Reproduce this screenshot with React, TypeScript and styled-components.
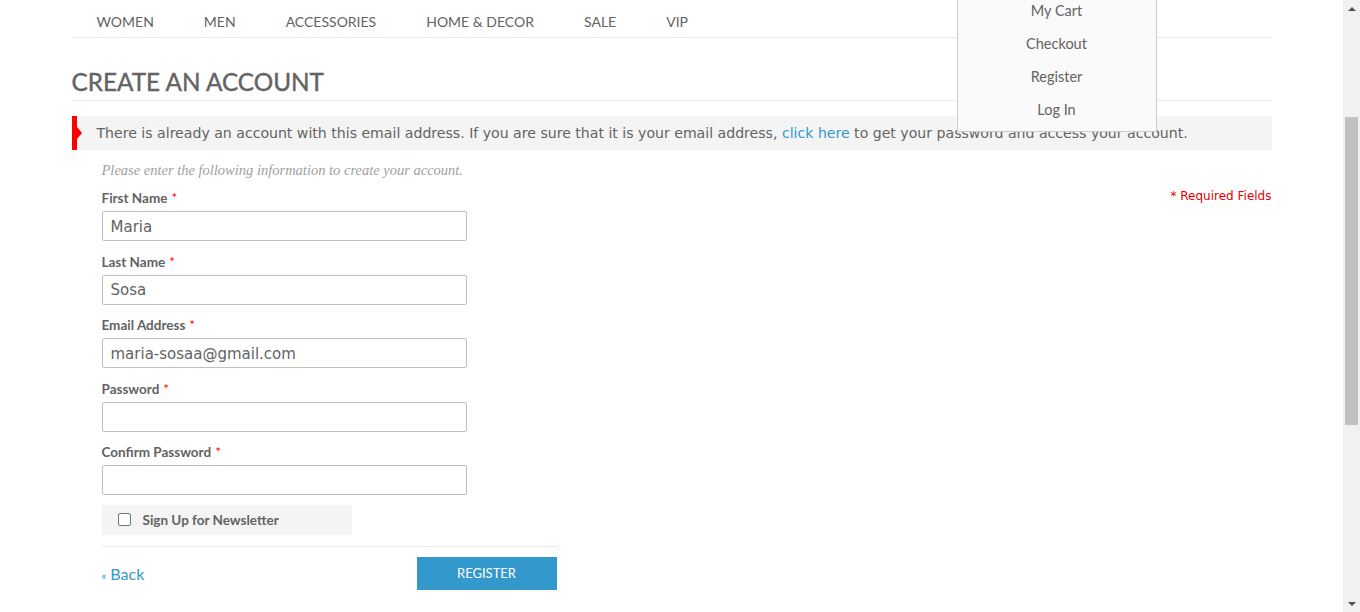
import React, { useLayoutEffect } from "react";
import styled, { createGlobalStyle } from "styled-components";

const GlobalStyle = createGlobalStyle`
  html, body { margin: 0; padding: 0; background: #fff; }
  body { font-family: "Lato", "Open Sans", sans-serif; color: #636363; padding-right: 17px; }
  * { box-sizing: border-box; }
`;

const Page = styled.div`
  position: relative;
  width: 1200px;
  margin: 0 auto;
`;

const Header = styled.header`
  height: 199px;
  display: flex;
  align-items: center;
  justify-content: space-between;
`;

const Logo = styled.div`
  font-size: 28px;
  letter-spacing: 2px;
  color: #3399cc;
`;

const AccountLink = styled.a`
  font-size: 14px;
  color: #636363;
  text-transform: uppercase;
  margin-right: 135px;
`;

const Nav = styled.nav`
  display: flex;
  height: 38px;
  border-bottom: 1px solid #e8e8e8;
  padding-top: 5.5px;
`;

const NavItem = styled.a`
  padding: 0 25px;
  height: 31px;
  line-height: 31px;
  font-size: 14px;
  color: #636363;
  text-transform: uppercase;
`;

const Dropdown = styled.ul`
  position: absolute;
  top: 120px;
  left: 885px;
  width: 200px;
  margin: 0;
  padding: 5.5px 0;
  list-style: none;
  background: #fafafa;
  border: 1px solid #cccccc;
  z-index: 5;
`;

const DropItem = styled.li`
  height: 33px;
  line-height: 33px;
  text-align: center;
  font-size: 14.5px;
  color: #636363;
`;

const Title = styled.h1`
  margin: 29px 0 0;
  font-size: 24.3px;
  line-height: 30px;
  font-weight: 400;
  -webkit-text-stroke: 0.4px #636363;
  color: #636363;
  padding-bottom: 3px;
  border-bottom: 1px solid #ececec;
`;

const Message = styled.div`
  position: relative;
  margin-top: 15px;
  height: 34px;
  line-height: 35px;
  background: #f4f4f4;
  padding-left: 25px;
  font-family: "DejaVu Sans", "Liberation Sans", sans-serif;
  font-size: 14.1px;
  color: #636363;
  white-space: nowrap;
  &::before {
    content: "";
    position: absolute;
    left: 0;
    top: 0;
    width: 5px;
    height: 100%;
    background: #ff0000;
  }
  &::after {
    content: "";
    position: absolute;
    left: 5px;
    top: 11px;
    border-top: 6px solid transparent;
    border-bottom: 6px solid transparent;
    border-left: 5px solid #ff0000;
  }
`;

const Link = styled.a`
  color: #3399cc;
  text-decoration: none;
`;

const FormArea = styled.div`
  display: flex;
  justify-content: space-between;
  padding-left: 30px;
  margin-top: 10px;
`;

const FormColumn = styled.div`
  width: 455px;
  display: flex;
  flex-direction: column;
`;

const Intro = styled.p`
  margin: 0;
  font-family: "Liberation Serif", "DejaVu Serif", serif;
  font-style: italic;
  font-size: 14.5px;
  line-height: 20px;
  color: #a0a0a0;
`;

const Required = styled.p`
  margin: 28px 0 0;
  font-family: "DejaVu Sans", "Liberation Sans", sans-serif;
  font-size: 12px;
  line-height: 17px;
  color: #e60000;
`;

const Field = styled.div<{ $first?: boolean }>`
  margin-top: ${(p) => (p.$first ? "10px" : "12.5px")};
  display: flex;
  flex-direction: column;
`;

const Label = styled.label`
  font-size: 13.5px;
  line-height: 17px;
  font-weight: 700;
  color: #636363;
  margin-bottom: 4px;
  & span {
    color: #ff0000;
    font-weight: 400;
    margin-left: 4px;
  }
`;

const Input = styled.input`
  width: 365px;
  height: 30px;
  border: 1px solid #c0c0c0;
  border-radius: 2px;
  padding: 1px 8px 0;
  font-family: "DejaVu Sans", "Liberation Sans", sans-serif;
  font-size: 15px;
  color: #636363;
  background: #fff;
  outline: none;
`;

const Newsletter = styled.label`
  margin-top: 9.5px;
  width: 250px;
  height: 30px;
  background: #f4f4f4;
  display: flex;
  align-items: center;
  padding-left: 16px;
  gap: 12px;
  font-size: 13.5px;
  font-weight: 700;
  color: #636363;
`;

const Check = styled.span`
  width: 13px;
  height: 13px;
  border: 1px solid #767676;
  border-radius: 2px;
  background: #fff;
`;

const Divider = styled.hr`
  margin: 11px 0 0;
  border: 0;
  border-top: 1px solid #e8e8e8;
  width: 455px;
`;

const Actions = styled.div`
  margin-top: 10px;
  display: flex;
  align-items: center;
  justify-content: space-between;
`;

const BackLink = styled.a`
  color: #3399cc;
  font-size: 16px;
  text-decoration: none;
  & small {
    font-size: 11px;
  }
`;

const RegisterButton = styled.button`
  width: 140px;
  height: 33px;
  border: 0;
  background: #3399cc;
  color: #fff;
  font-family: "Lato", sans-serif;
  font-size: 13px;
  text-transform: uppercase;
`;

const Footer = styled.footer`
  margin-top: 22px;
  height: 337px;
`;

/* Browser-style vertical scrollbar drawn over the right edge of the window */
const ScrollBar = styled.div`
  position: fixed;
  top: 0;
  right: 0;
  width: 17px;
  height: 100vh;
  background: #f1f1f1;
  display: flex;
  flex-direction: column;
  z-index: 10;
`;

const ScrollArrow = styled.div`
  height: 17px;
  display: flex;
  align-items: center;
  justify-content: center;
`;

const ScrollTrack = styled.div`
  flex: 1;
  padding-top: 100px;
`;

const ScrollThumb = styled.div`
  margin: 0 2px;
  height: 308px;
  background: #c1c1c1;
`;

const fields = [
  { label: "First Name", value: "Maria" },
  { label: "Last Name", value: "Sosa" },
  { label: "Email Address", value: "maria-sosaa@gmail.com" },
  { label: "Password", value: "" },
  { label: "Confirm Password", value: "" },
];

export default function App() {
  useLayoutEffect(() => {
    window.scrollTo(0, 199);
  }, []);

  return (
    <>
      <GlobalStyle />
      <Page>
        <Header>
          <Logo>MADISON ISLAND</Logo>
          <AccountLink>Account</AccountLink>
        </Header>
        <Dropdown>
          <DropItem>My Account</DropItem>
          <DropItem>My Wishlist</DropItem>
          <DropItem>My Cart</DropItem>
          <DropItem>Checkout</DropItem>
          <DropItem>Register</DropItem>
          <DropItem>Log In</DropItem>
        </Dropdown>
        <Nav>
          {["Women", "Men", "Accessories", "Home & Decor", "Sale", "VIP"].map((n) => (
            <NavItem key={n}>{n}</NavItem>
          ))}
        </Nav>
        <Title>CREATE AN ACCOUNT</Title>
        <Message>
          There is already an account with this email address. If you are sure that it is your email
          address, <Link>click here</Link> to get your password and access your account.
        </Message>
        <FormArea>
          <FormColumn>
            <Intro>Please enter the following information to create your account.</Intro>
            {fields.map((f, i) => (
              <Field key={f.label} $first={i === 0}>
                <Label>
                  {f.label}
                  <span>*</span>
                </Label>
                <Input type="text" defaultValue={f.value} />
              </Field>
            ))}
            <Newsletter>
              <Check />
              Sign Up for Newsletter
            </Newsletter>
            <Divider />
            <Actions>
              <BackLink>
                <small>«</small> Back
              </BackLink>
              <RegisterButton>Register</RegisterButton>
            </Actions>
          </FormColumn>
          <Required>* Required Fields</Required>
        </FormArea>
        <Footer />
      </Page>
      <ScrollBar>
        <ScrollArrow>
          <svg width="8" height="4" viewBox="0 0 8 4">
            <path d="M0 4 L4 0 L8 4 Z" fill="#505050" />
          </svg>
        </ScrollArrow>
        <ScrollTrack>
          <ScrollThumb />
        </ScrollTrack>
        <ScrollArrow>
          <svg width="8" height="4" viewBox="0 0 8 4">
            <path d="M0 0 L8 0 L4 4 Z" fill="#505050" />
          </svg>
        </ScrollArrow>
      </ScrollBar>
    </>
  );
}
